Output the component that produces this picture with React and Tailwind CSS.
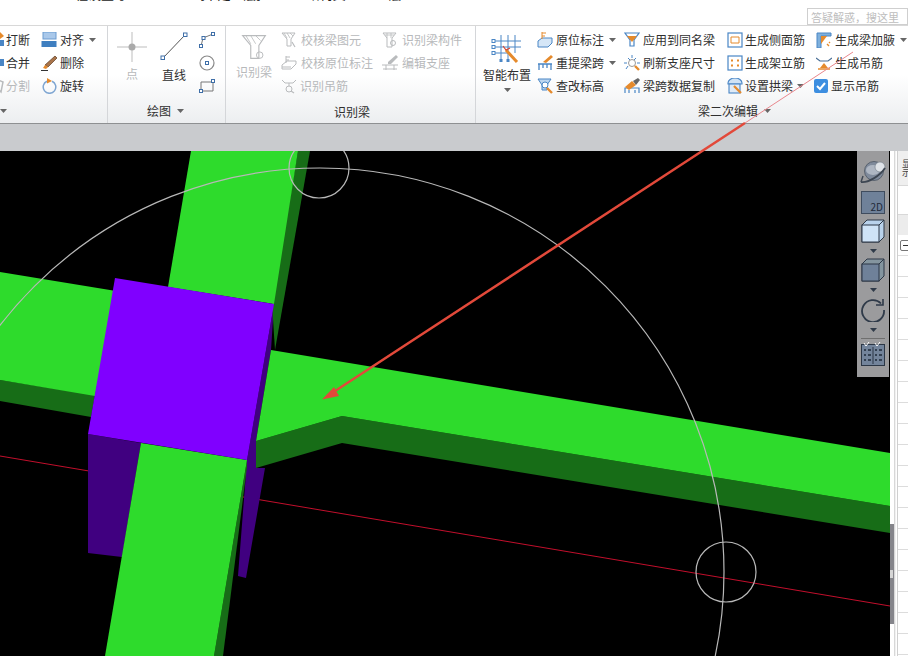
import React from 'react';

const BLUE = '#4a86c5';
const ORANGE = '#e58a2c';
const GRAY = '#b9bbbd';

const Ico = ({ children, size = 16, box = 16 }) => (
  <svg width={size} height={size} viewBox={`0 0 ${box} ${box}`} fill="none" className="shrink-0">
    {children}
  </svg>
);

const Caret = ({ className = '' }) => (
  <svg width="7" height="4" viewBox="0 0 7 4" className={`shrink-0 ${className}`}>
    <path d="M0 0h7L3.5 4z" fill="#666" />
  </svg>
);

// small ribbon icons
const Cut = () => (
  <Ico>
    <path d="M12 0l4 4-4 3-3-3z" fill={ORANGE} />
    <rect x="9" y="8" width="7" height="6" fill={BLUE} />
  </Ico>
);
const Merge = () => (
  <Ico>
    <rect x="8" y="4" width="8" height="7" fill={BLUE} />
  </Ico>
);
const Split = () => (
  <Ico>
    <path d="M10 2l5 2-2 10-3-3z" stroke={GRAY} strokeWidth="1.5" />
  </Ico>
);
const Align = () => (
  <Ico>
    <rect x="2" y="0" width="13" height="7" fill="#a9c8ea" stroke="#6b9bd0" />
    <rect x="0.5" y="9" width="15" height="6" fill="#3f7fc0" />
  </Ico>
);
const Erase = () => (
  <Ico>
    <path d="M14 1l2 2-9 9-3-2z" fill="#a9744a" stroke="#5b3b22" strokeWidth="0.7" />
    <path d="M4 10l3 2-2 2-3-1z" fill="#e58a2c" />
    <path d="M0 15.5h7" stroke="#333" strokeWidth="1" />
  </Ico>
);
const Rotate = () => (
  <Ico>
    <path d="M6 3.2a6.3 6.3 0 1 0 5 0" stroke="#7fa6d2" strokeWidth="1.5" />
    <path d="M6 0l5 3-5 2.5z" fill={ORANGE} />
  </Ico>
);
const Poly = () => (
  <Ico>
    <path d="M2 14L4 6l10-4" stroke="#777" strokeWidth="1" />
    <rect x="0.5" y="12.5" width="3" height="3" fill="#fff" stroke="#3f6fa8" />
    <rect x="3" y="4.5" width="3" height="3" fill="#fff" stroke="#3f6fa8" />
    <rect x="12.5" y="0.5" width="3" height="3" fill="#fff" stroke="#3f6fa8" />
  </Ico>
);
const CircleIc = () => (
  <Ico>
    <circle cx="8" cy="8" r="7" stroke="#888" strokeWidth="1.2" />
    <rect x="6.5" y="6.5" width="3" height="3" fill="#fff" stroke="#3f6fa8" />
  </Ico>
);
const RectIc = () => (
  <Ico>
    <path d="M2 4h12v9H2z" stroke="#777" strokeWidth="1" />
    <rect x="0.5" y="11.5" width="3" height="3" fill="#fff" stroke="#3f6fa8" />
    <rect x="12.5" y="1.5" width="3" height="3" fill="#fff" stroke="#3f6fa8" />
  </Ico>
);
const Funnel = ({ tone = GRAY }) => (
  <Ico>
    <path d="M1 1h13l-4 6v7H6V7z" stroke={tone} strokeWidth="1" />
    <path d="M3 1l3 5M6 1l3 5M9 1l3 3" stroke={tone} strokeWidth="0.8" />
    <path d="M11 10l3 5" stroke={tone} strokeWidth="1.2" />
  </Ico>
);
const Box = () => (
  <Ico>
    <path d="M1 10l5-4h9v3l-5 5H1z" stroke={GRAY} strokeWidth="1" />
    <path d="M5 1v7M5 2h4M5 5h3" stroke={GRAY} strokeWidth="1" />
    <path d="M1 12h9" stroke={GRAY} strokeWidth="1" />
  </Ico>
);
const Hoist = () => (
  <Ico>
    <path d="M1 2l3 3h8l3-3" stroke={GRAY} strokeWidth="1" />
    <path d="M8 5v3" stroke={GRAY} strokeWidth="1" />
    <circle cx="8" cy="11" r="3" stroke={GRAY} strokeWidth="1" />
    <path d="M10 13l3 2" stroke={GRAY} strokeWidth="1.2" />
  </Ico>
);
const FunnelB = () => (
  <Ico>
    <path d="M1 1h13l-4 5v9H5V6z" stroke={GRAY} strokeWidth="1" />
    <path d="M3 3h9M5 1v5M9 1v5" stroke={GRAY} strokeWidth="0.8" />
    <circle cx="11" cy="11" r="2.5" stroke={GRAY} strokeWidth="1" />
  </Ico>
);
const EditSeat = () => (
  <Ico>
    <path d="M14 0l2 2-7 7H6V7z" fill={GRAY} />
    <path d="M0 10h16M1 14h14M4 10v5M12 10v5" stroke={GRAY} strokeWidth="1" />
  </Ico>
);
const Mark = () => (
  <Ico>
    <path d="M1 9l4-3h10v5l-4 4H1z" fill="#d5e6f7" stroke={BLUE} strokeWidth="1" />
    <path d="M5 0v7M5 1h4M5 4h3" stroke={ORANGE} strokeWidth="1" />
  </Ico>
);
const Reload = () => (
  <Ico>
    <path d="M14 0l2 2-7 6-3-1z" fill={ORANGE} />
    <path d="M1 9h14M2 9v6M14 9v6M6 9v4M10 9v4" stroke={BLUE} strokeWidth="1.3" />
  </Ico>
);
const Change = () => (
  <Ico>
    <path d="M1 1h13l-4 6v5H5V7z" fill="#bcd6f0" stroke={BLUE} strokeWidth="1" />
    <circle cx="8" cy="7" r="3" fill="#fff" stroke={BLUE} />
    <path d="M10 10l5 5" stroke={ORANGE} strokeWidth="2.4" />
  </Ico>
);
const Apply = () => (
  <Ico>
    <path d="M1 1h14l-5 7v6H6V8z" fill="#fff" stroke={BLUE} strokeWidth="1.2" />
    <path d="M3 4h10L8 10z" fill={ORANGE} />
  </Ico>
);
const Refresh = () => (
  <Ico>
    <path d="M8 0v3M2 14l2-3M0 8h3M13 8h3M4 3l2 2M12 3l-2 2" stroke={BLUE} strokeWidth="1" />
    <circle cx="8" cy="8" r="3.5" stroke="#999" strokeWidth="1" />
    <path d="M11 11l4 4" stroke={ORANGE} strokeWidth="2.4" />
  </Ico>
);
const Copy = () => (
  <Ico>
    <path d="M1 15v-5h14v5M5 15v-3M11 15v-3" stroke={BLUE} strokeWidth="1.2" />
    <path d="M1 9l7-6 4 4-7 5z" fill={ORANGE} />
    <path d="M9 3l5-3 2 2-4 5z" fill="#666" />
  </Ico>
);
const Side = () => (
  <Ico>
    <rect x="1" y="1" width="14" height="14" fill="#fff" stroke={BLUE} strokeWidth="1.2" />
    <path d="M4 5h8M4 11h8M4 5v6M12 5v6" stroke={ORANGE} strokeWidth="1" />
  </Ico>
);
const Stand = () => (
  <Ico>
    <rect x="1" y="1" width="14" height="14" fill="#fff" stroke={BLUE} strokeWidth="1.2" />
    <path d="M5 4.5v2M11 4.5v2M5 9.5v2M11 9.5v2" stroke={ORANGE} strokeWidth="2" />
  </Ico>
);
const Arch = () => (
  <Ico>
    <path d="M1 5a7 5 0 0 1 14 0v1H1z" fill="#cfe2f5" stroke={BLUE} strokeWidth="1.1" />
    <rect x="2" y="6" width="11" height="9" fill="#dfeaf6" stroke={BLUE} strokeWidth="1.1" />
    <path d="M7 8l7 7" stroke={ORANGE} strokeWidth="2.2" />
  </Ico>
);
const Haunch = () => (
  <Ico>
    <path d="M1 1h14v3H5v12H1z" fill="#7fb0dc" stroke={BLUE} strokeWidth="1" />
    <path d="M5 4h6L5 12z" fill={ORANGE} />
    <path d="M11 12l2 2M13 10l1 1" stroke={ORANGE} strokeWidth="1.4" />
  </Ico>
);
const Hang = () => (
  <Ico>
    <path d="M0 3l4 3h8l4-3" stroke="#4a6f96" strokeWidth="1.2" />
    <path d="M4 13l4-5 4 5z" fill={ORANGE} />
    <path d="M2 14h12" stroke={ORANGE} strokeWidth="1.5" />
  </Ico>
);
const Check = () => (
  <svg width="14" height="14" viewBox="0 0 14 14" className="shrink-0">
    <rect width="14" height="14" rx="2" fill="#3d8ee0" />
    <path d="M3 7l3 3 5-6" stroke="#fff" strokeWidth="2" fill="none" />
  </svg>
);

const Row = ({ icon, label, off, caret, gap = 'gap-[3px]' }) => (
  <div className={`flex h-[23px] items-center ${gap}`}>
    {icon}
    <span className={`whitespace-nowrap ${off ? 'text-[#b7b9bb]' : 'text-[#2f2f2f]'}`}>{label}</span>
    {caret && <Caret className="ml-[2px]" />}
  </div>
);

const Group = ({ width, children, label, caret, labelPad, last }) => (
  <div className={`${width} flex shrink-0 flex-col overflow-hidden ${last ? '' : 'border-r border-[#d4d6d9]'}`}>
    <div className="flex h-[72px] pt-[2px]">{children}</div>
    <div className={`flex h-[25px] items-center gap-[6px] ${labelPad} text-[#2f2f2f]`}>
      {label && <span>{label}</span>}
      {caret && <Caret />}
    </div>
  </div>
);

function Canvas() {
  return (
    <svg width="890" height="505" viewBox="0 151 890 505" className="block bg-black">
      <line x1="0" y1="456" x2="890" y2="606" stroke="#c20f2c" strokeWidth="1" />
      {/* column sides */}
      <polygon points="88,434 141,443 122,557 88,553" fill="#400080" />
      <polygon points="274,304 271,350 256,441 256,468 265,468 246,578 238,576 247,460" fill="#400080" />
      {/* left beam */}
      <polygon points="0,380 95,395 91,417 0,401" fill="#176d17" />
      <polygon points="0,272 116,291 95,396 0,380" fill="#2edb2c" />
      {/* upper beam */}
      <polygon points="298,151 310,151 275,350 272,304" fill="#176d17" />
      <polygon points="191,151 298,151 274,304 168,287" fill="#2edb2c" />
      {/* right beam */}
      <polygon points="256,441 342,416 890,506 890,533 342,443 256,468" fill="#176d17" />
      <polygon points="271,350 890,453 890,506 342,416 256,441" fill="#2edb2c" />
      {/* lower beam */}
      <polygon points="247,460 214,656 223,656 247,467" fill="#176d17" />
      <polygon points="141,443 247,460 214,656 105,656" fill="#2edb2c" />
      {/* column top */}
      <polygon points="115,278 274,304 247,460 88,434" fill="#8000ff" />
      {/* grips */}
      <circle cx="320" cy="572" r="404" fill="none" stroke="#b8b8b8" strokeWidth="1.2" />
      <circle cx="319" cy="168" r="30" fill="none" stroke="#b8b8b8" strokeWidth="1.2" />
      <circle cx="726" cy="572" r="30" fill="none" stroke="#b8b8b8" strokeWidth="1.2" />
    </svg>
  );
}

const Planet = () => (
  <svg width="26" height="24" viewBox="0 0 26 24">
    <circle cx="14" cy="11" r="9.5" fill="#7f8a9b" stroke="#4b5562" strokeWidth="0.8" />
    <ellipse cx="13" cy="10" rx="7" ry="5" fill="#aeb6c2" />
    <circle cx="20" cy="7" r="5" fill="#dfe3e8" stroke="#6f7885" strokeWidth="0.6" />
    <path d="M1 22C8 23 20 16 25 8" stroke="#3d4652" strokeWidth="1.8" fill="none" />
    <path d="M1 22l2-6" stroke="#3d4652" strokeWidth="1.4" fill="none" />
  </svg>
);
const Flat2D = () => (
  <div className="flex h-[23px] w-[24px] shrink-0 items-end justify-end border border-[#3f4c5e] bg-[#6f8199] pr-[1px] text-[10px] leading-[12px] text-[#1f2a3a]">
    2D
  </div>
);
const Cube = ({ face, top }) => (
  <svg width="24" height="24" viewBox="0 0 24 24">
    <path d="M1 6l5-5h17v17l-5 5H1z" fill={top} stroke="#2c3746" />
    <rect x="1" y="6" width="17" height="17" fill={face} stroke="#2c3746" />
    <path d="M1 6l5-5M18 6l5-5M18 23l5-5" stroke="#2c3746" />
  </svg>
);
const Spin = () => (
  <svg width="24" height="24" viewBox="0 0 24 24" fill="none">
    <path d="M20 5.5A11 11 0 1 0 23 12" stroke="#2f3a49" strokeWidth="1.8" />
    <path d="M15 7l7 0 0-6" stroke="#2f3a49" strokeWidth="1.6" />
  </svg>
);
const Checklist = () => (
  <svg width="24" height="24" viewBox="0 0 24 24" fill="none">
    <rect x="0.5" y="2.5" width="23" height="21" fill="#73849b" stroke="#2c3746" />
    <path d="M3 1l2 3 3-4M14 1l2 3 3-4" stroke="#fff" strokeWidth="1" />
    <path d="M12 5v17" stroke="#2c3746" />
    <path d="M3 8h2M7 8h3M3 13h2M7 13h3M3 18h2M7 18h3M14 8h2M18 8h3M14 13h2M18 13h3M14 18h2M18 18h3" stroke="#1f2a3a" strokeWidth="1.6" />
  </svg>
);
const ToolCaret = () => (
  <svg width="7" height="4" viewBox="0 0 7 4">
    <path d="M0 0h7L3.5 4z" fill="#2f3a49" />
  </svg>
);

function ViewTools() {
  return (
    <div className="absolute right-px top-0 flex h-[226px] w-[32px] flex-col items-center bg-[#9b9b9d] pt-[9px]">
      <Planet />
      <div className="mt-[7px]"><Flat2D /></div>
      <div className="mt-[5px]"><Cube face="#cfe3f7" top="#b9d2ec" /></div>
      <div className="mt-[6px]"><ToolCaret /></div>
      <div className="mt-[5px]"><Cube face="#6f8199" top="#84959f" /></div>
      <div className="mt-[6px]"><ToolCaret /></div>
      <div className="mt-[6px]"><Spin /></div>
      <div className="mt-[6px]"><ToolCaret /></div>
      <div className="mt-[6px] h-px w-[24px] bg-[#6f6f6f]" />
      <div className="mt-[3px]"><Checklist /></div>
    </div>
  );
}

function SidePanel() {
  const rows = Array.from({ length: 20 }, (_, i) => i);
  return (
    <div className="flex h-[505px] w-[18px] shrink-0 overflow-hidden bg-white">
      <div className="w-[4px] bg-white" />
      <div className="w-[2px] border-l border-[#d8d8d8] bg-[#f1f1f1]" />
      <div className="w-px bg-white" />
      <div className="flex min-w-0 flex-1 flex-col overflow-hidden border-l border-[#cfcfcf]">
        <div className="flex h-[34px] shrink-0 items-center justify-end overflow-hidden bg-[#efefef] text-[9px] leading-[9px] text-[#444]">
          <span className="-mr-[3px] w-[9px]">显示</span>
        </div>
        <div className="h-[30px] shrink-0 border-y border-[#d8d8d8] bg-white" />
        <div className="h-[20px] shrink-0 bg-[#ececec]" />
        <div className="flex h-[21px] shrink-0 items-center border-b border-[#dcdcdc] pl-[2px]">
          <div className="flex h-[11px] w-[12px] shrink-0 items-center rounded-[2px] border border-[#777] pl-[2px]">
            <div className="h-px w-[6px] bg-[#333]" />
          </div>
        </div>
        {rows.map(i => (
          <div key={i} className="h-[21px] shrink-0 border-b border-[#dcdcdc]" />
        ))}
      </div>
    </div>
  );
}

export default function App() {
  return (
    <div className="relative h-[656px] w-[908px] overflow-hidden bg-white font-['Noto_Sans_CJK_SC','Liberation_Sans',sans-serif] text-[12px] leading-[16px]">
      {/* title strip, cut off by the window top */}
      <div className="relative flex h-[25px] overflow-hidden bg-white">
        <div className="-mt-[14px] flex h-[16px] whitespace-nowrap text-[13px] text-[#222]">
          <span className="ml-[20px]">工</span>
          <span className="ml-[29px]">工程设置导</span>
          <span className="ml-[73px]">[未定义层]</span>
          <span className="ml-[46px]">结构类型</span>
          <span className="ml-[30px]">层</span>
        </div>
        <div className="ml-auto mt-[8px] flex h-[17px] w-[101px] shrink-0 items-center border border-[#cfcfcf] bg-white pl-[3px] text-[11px] text-[#bdbdbd]">
          答疑解惑，搜这里
        </div>
      </div>

      {/* ribbon */}
      <div className="flex h-[99px] border-y border-t-[#d8d8d8] border-b-[#8e9092] bg-linear-to-b from-white via-white to-[#eceef0]">
        <Group width="w-[108px]" caret labelPad="pl-0">
          <div className="-ml-[12px] flex w-[53px] shrink-0 flex-col">
            <Row icon={<Cut />} label="打断" gap="gap-[2px]" />
            <Row icon={<Merge />} label="合并" gap="gap-[2px]" />
            <Row icon={<Split />} label="分割" off gap="gap-[2px]" />
          </div>
          <div className="flex flex-col">
            <Row icon={<Align />} label="对齐" caret />
            <Row icon={<Erase />} label="删除" />
            <Row icon={<Rotate />} label="旋转" />
          </div>
        </Group>

        <Group width="w-[118px]" label="绘图" caret labelPad="pl-[39px]">
          <div className="ml-[8px] flex w-[32px] flex-col items-center pt-[4px]">
            <svg width="30" height="30" viewBox="0 0 30 30">
              <path d="M15 0v30M0 15h30" stroke="#bdbdbd" strokeWidth="1" />
              <circle cx="15" cy="15" r="3.5" fill="#aaa" />
            </svg>
            <span className="mt-[4px] text-[#b7b9bb]">点</span>
          </div>
          <div className="ml-[12px] flex w-[28px] flex-col items-center pt-[4px]">
            <svg width="28" height="29" viewBox="0 0 28 29">
              <path d="M3 26L25 3" stroke="#555" strokeWidth="1" />
              <rect x="1" y="24" width="3.5" height="3.5" fill="#fff" stroke="#3f6fa8" />
              <rect x="23.5" y="1" width="3.5" height="3.5" fill="#fff" stroke="#3f6fa8" />
            </svg>
            <span className="mt-[6px] text-[#2f2f2f]">直线</span>
          </div>
          <div className="ml-[11px] flex flex-col">
            <div className="flex h-[23px] items-center"><Poly /></div>
            <div className="flex h-[23px] items-center"><CircleIc /></div>
            <div className="flex h-[23px] items-center"><RectIc /></div>
          </div>
        </Group>

        <Group width="w-[250px]" label="识别梁" labelPad="pl-[108px] pt-[2px]">
          <div className="ml-[10px] flex w-[36px] flex-col items-center pt-[6px] text-[#b7b9bb]">
            <Ico size={26}><path d="M1 1h14l-4 6v8H6V7z" stroke={GRAY} strokeWidth="0.7" /><path d="M3 1l3 5M6 1l3 5M9 1l3 3" stroke={GRAY} strokeWidth="0.5" /><circle cx="11.5" cy="13" r="2" stroke={GRAY} strokeWidth="0.6" /></Ico>
            <span className="mt-[4px]">识别梁</span>
          </div>
          <div className="ml-[9px] flex w-[101px] shrink-0 flex-col">
            <Row icon={<Funnel />} label="校核梁图元" off gap="gap-[4px]" />
            <Row icon={<Box />} label="校核原位标注" off gap="gap-[4px]" />
            <Row icon={<Hoist />} label="识别吊筋" off />
          </div>
          <div className="flex flex-col">
            <Row icon={<FunnelB />} label="识别梁构件" off gap="gap-[4px]" />
            <Row icon={<EditSeat />} label="编辑支座" off gap="gap-[4px]" />
          </div>
        </Group>

        <Group width="w-[432px]" label="梁二次编辑" caret labelPad="pl-[222px]" last>
          <div className="ml-[7px] flex w-[48px] shrink-0 flex-col items-center pt-[6px]">
            <svg width="32" height="31" viewBox="0 0 32 31" fill="none">
              <path d="M10 1v24M17 1v24M24 1v18M3 7h27M3 13h27M3 19h16" stroke="#4a86c5" strokeWidth="1" />
              <rect x="1" y="5.5" width="3" height="3" fill="#fff" stroke="#4a86c5" />
              <rect x="1" y="11.5" width="3" height="3" fill="#fff" stroke="#4a86c5" />
              <rect x="1" y="17.5" width="3" height="3" fill="#fff" stroke="#4a86c5" />
              <rect x="8.5" y="25" width="3" height="3" fill="#4a86c5" />
              <rect x="15.5" y="25" width="3" height="3" fill="#4a86c5" />
              <path d="M15 16l11 12" stroke="#e58a2c" strokeWidth="3" />
              <path d="M12 12l3 4 4-2" stroke="#d9462f" strokeWidth="1.2" />
            </svg>
            <span className="mt-[2px] text-[#2f2f2f]">智能布置</span>
            <Caret className="mt-[5px]" />
          </div>
          <div className="ml-[6px] flex w-[87px] shrink-0 flex-col">
            <Row icon={<Mark />} label="原位标注" caret />
            <Row icon={<Reload />} label="重提梁跨" caret />
            <Row icon={<Change />} label="查改标高" />
          </div>
          <div className="flex w-[103px] shrink-0 flex-col">
            <Row icon={<Apply />} label="应用到同名梁" />
            <Row icon={<Refresh />} label="刷新支座尺寸" />
            <Row icon={<Copy />} label="梁跨数据复制" />
          </div>
          <div className="flex w-[89px] shrink-0 flex-col">
            <Row icon={<Side />} label="生成侧面筋" gap="gap-[2px]" />
            <Row icon={<Stand />} label="生成架立筋" gap="gap-[2px]" />
            <Row icon={<Arch />} label="设置拱梁" caret gap="gap-[2px]" />
          </div>
          <div className="flex flex-col">
            <Row icon={<Haunch />} label="生成梁加腋" caret />
            <Row icon={<Hang />} label="生成吊筋" />
            <div className="-ml-[2px]"><Row icon={<Check />} label="显示吊筋" /></div>
          </div>
        </Group>
      </div>

      <div className="h-[27px] bg-[#c9cbce]" />

      {/* 3D view and side panel */}
      <div className="flex">
        <div className="relative h-[505px] w-[890px] shrink-0">
          <Canvas />
          <ViewTools />
        </div>
        <div className="relative">
          <SidePanel />
          <div className="absolute left-0 top-[373px] flex h-[100px] w-[4px] items-center bg-[#85858b]">
            <div className="h-[8px] w-[3px] bg-[#d6d6d6]" />
          </div>
        </div>
      </div>

      {/* callout arrow drawn over the window */}
      <svg width="908" height="656" viewBox="0 0 908 656" className="pointer-events-none absolute left-0 top-0">
        <path d="M853 52L745 123" stroke="#e8868c" strokeWidth="1" fill="none" />
        <path d="M745 123L332 393" stroke="#e2493a" strokeWidth="2.5" fill="none" />
        <polygon points="322,399.5 334,387 339,396" fill="#e2493a" />
      </svg>
    </div>
  );
}
